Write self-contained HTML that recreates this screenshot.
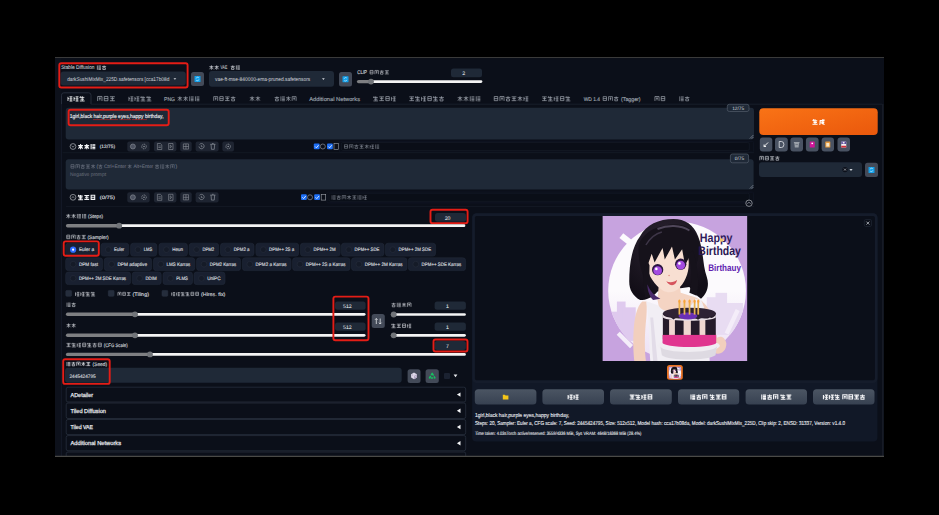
<!DOCTYPE html>
<html><head><meta charset="utf-8"><title>SD WebUI</title>
<style>html,body{margin:0;padding:0;background:#000;width:939px;height:515px;overflow:hidden}svg{display:block}text{font-family:"Liberation Sans",sans-serif}</style>
</head><body><div id="wrap">
<svg width="939" height="515" viewBox="0 0 939 515" font-family="Liberation Sans, sans-serif" text-rendering="geometricPrecision">
<rect x="0.00" y="0.00" width="939.00" height="515.00" rx="0" fill="#000" />
<rect x="55.00" y="57.00" width="829.00" height="400.00" rx="0" fill="#0b0f19" />
<rect x="55.00" y="58.00" width="6.50" height="398.00" rx="0" fill="#0d111b" />
<line x1="55.00" y1="57.50" x2="884.00" y2="57.50" stroke="#3a3a3a" stroke-width="1" />
<rect x="66.20" y="452.00" width="399.50" height="8.00" rx="1.8" fill="#0b0f19" stroke="#242b39" stroke-width="0.9" />
<line x1="61.50" y1="104.00" x2="61.50" y2="456.00" stroke="#131826" stroke-width="1" />
<line x1="882.80" y1="104.00" x2="882.80" y2="456.00" stroke="#171b26" stroke-width="1.6" />
<text x="61.20" y="69.44" font-size="5.4" fill="#c9ccd2" font-weight="400" stroke="#c9ccd2" stroke-width="0.08" textLength="33.30" lengthAdjust="spacingAndGlyphs">Stable Diffusion</text>
<path transform="translate(96.35,64.95) scale(0.510)" d="M2 1v8.5 M4 2h5 M4 4.3h5 M4 6.6h5 M4 8.8h5" stroke="#c9ccd2" stroke-width="1.4" fill="none" opacity="1.00"/>
<path transform="translate(101.55,64.95) scale(0.510)" d="M1 3h8 M5 1v4 M2.5 5.5h5v3.5h-5z" stroke="#c9ccd2" stroke-width="1.4" fill="none" opacity="1.00"/>
<rect x="60.60" y="71.50" width="125.20" height="14.10" rx="3" fill="#1f2937" />
<text x="67.20" y="80.88" font-size="5.5" fill="#d3d6dc" font-weight="400" textLength="102.10" lengthAdjust="spacingAndGlyphs">darkSushiMixMix_225D.safetensors [cca17b08d</text>
<path d="M173.5 78.2 h2.8 l-1.4 1.6z" fill="#d1d5db"/>
<rect x="59.30" y="63.30" width="128.30" height="24.20" rx="2" fill="none" stroke="#e41d16" stroke-width="1.9" />
<rect x="191.00" y="72.00" width="13.00" height="14.00" rx="2.5" fill="#434a58" />
<rect x="194.50" y="76.00" width="6.00" height="6.00" rx="0.5" fill="#12a0ea" />
<path d="M198.80 77.80 a1.5 1.5 0 0 0 -2.6 0.6 M196.20 80.20 a1.5 1.5 0 0 0 2.6 -0.6" stroke="#dff3ff" stroke-width="0.7" fill="none"/>
<path transform="translate(208.85,64.83) scale(0.514)" d="M1 3.5h8 M5 1v8.5 M5 4l-3.5 4.5 M5 4l3.5 4.5" stroke="#c9ccd2" stroke-width="1.4" fill="none" opacity="1.00"/>
<path transform="translate(214.10,64.83) scale(0.514)" d="M1 3.5h8 M5 1v8.5 M5 4l-3.5 4.5 M5 4l3.5 4.5" stroke="#c9ccd2" stroke-width="1.4" fill="none" opacity="1.00"/>
<text x="220.50" y="69.34" font-size="5.4" fill="#c9ccd2" font-weight="400" stroke="#c9ccd2" stroke-width="0.08" textLength="6.70" lengthAdjust="spacingAndGlyphs">VAE</text>
<path transform="translate(230.25,64.90) scale(0.500)" d="M1 3h8 M5 1v4 M2.5 5.5h5v3.5h-5z" stroke="#c9ccd2" stroke-width="1.4" fill="none" opacity="1.00"/>
<path transform="translate(235.35,64.90) scale(0.500)" d="M2 1v8.5 M4 2h5 M4 4.3h5 M4 6.6h5 M4 8.8h5" stroke="#c9ccd2" stroke-width="1.4" fill="none" opacity="1.00"/>
<rect x="209.00" y="71.00" width="125.00" height="15.70" rx="3" fill="#1f2937" />
<text x="215.00" y="80.78" font-size="5.5" fill="#d3d6dc" font-weight="400" textLength="95.20" lengthAdjust="spacingAndGlyphs">vae-ft-mse-840000-ema-pruned.safetensors</text>
<path d="M322 78.3 h2.8 l-1.4 1.6z" fill="#d1d5db"/>
<rect x="339.00" y="72.00" width="13.00" height="14.60" rx="2.5" fill="#434a58" />
<rect x="342.50" y="76.30" width="6.00" height="6.00" rx="0.5" fill="#12a0ea" />
<path d="M346.80 78.10 a1.5 1.5 0 0 0 -2.6 0.6 M344.20 80.50 a1.5 1.5 0 0 0 2.6 -0.6" stroke="#dff3ff" stroke-width="0.7" fill="none"/>
<text x="357.20" y="74.14" font-size="5.4" fill="#c9ccd2" font-weight="400" stroke="#c9ccd2" stroke-width="0.16" textLength="9.90" lengthAdjust="spacingAndGlyphs">CLIP</text>
<path transform="translate(369.05,69.70) scale(0.500)" d="M2 1.5h6v7h-6z M2 5h6" stroke="#c9ccd2" stroke-width="1.4" fill="none" opacity="0.83"/>
<path transform="translate(374.15,69.70) scale(0.500)" d="M1.5 9V1.5h7V9 M3.5 4.5h3 M5 3v5" stroke="#c9ccd2" stroke-width="1.4" fill="none" opacity="0.83"/>
<path transform="translate(379.25,69.70) scale(0.500)" d="M1 3h8 M5 1v4 M2.5 5.5h5v3.5h-5z" stroke="#c9ccd2" stroke-width="1.4" fill="none" opacity="0.83"/>
<path transform="translate(384.35,69.70) scale(0.500)" d="M1 2h8 M2 5h6 M1 8.5h8 M5 2v6.5" stroke="#c9ccd2" stroke-width="1.4" fill="none" opacity="0.83"/>
<rect x="451.00" y="68.50" width="31.00" height="8.70" rx="2.5" fill="#1f2937" />
<text x="463.60" y="75.22" font-size="5.2" fill="#e5e7eb" font-weight="400" stroke="#e5e7eb" stroke-width="0.04" text-anchor="middle">2</text>
<line x1="358.60" y1="81.60" x2="371.00" y2="81.60" stroke="#7e7f82" stroke-width="3.4" stroke-linecap="round"/>
<line x1="371.00" y1="81.60" x2="481.00" y2="81.60" stroke="#f4f4f4" stroke-width="2.7" stroke-linecap="round"/>
<circle cx="371.00" cy="81.60" r="2.9" fill="#717479"/>
<path d="M61.5 104.2 V95.2 a2.4 2.4 0 0 1 2.4 -2.4 H88.6 a2.4 2.4 0 0 1 2.4 2.4 V104.2" fill="#0b0f19" stroke="#2a3140" stroke-width="0.9"/>
<line x1="91.00" y1="104.20" x2="882.00" y2="104.20" stroke="#1a202c" stroke-width="0.9" />
<path transform="translate(67.06,95.61) scale(0.598)" d="M1.5 2v7 M1.5 5h2 M4 2h5 M6.5 2v7.5 M4 9h5 M4 5.5h5" stroke="#f3f4f6" stroke-width="1.4" fill="none" opacity="1.00"/>
<path transform="translate(73.16,95.61) scale(0.598)" d="M1.5 2v7 M1.5 5h2 M4 2h5 M6.5 2v7.5 M4 9h5 M4 5.5h5" stroke="#f3f4f6" stroke-width="1.4" fill="none" opacity="1.00"/>
<path transform="translate(79.26,95.61) scale(0.598)" d="M2 1l-1 3 M1.5 3h7 M5 1v8 M2 6h6 M1 9h8" stroke="#f3f4f6" stroke-width="1.4" fill="none" opacity="1.00"/>
<path transform="translate(96.76,95.53) scale(0.614)" d="M1.5 9V1.5h7V9 M3.5 4.5h3 M5 3v5" stroke="#9aa0aa" stroke-width="1.4" fill="none" opacity="0.90"/>
<path transform="translate(103.03,95.53) scale(0.614)" d="M2 1.5h6v7h-6z M2 5h6" stroke="#9aa0aa" stroke-width="1.4" fill="none" opacity="0.90"/>
<path transform="translate(109.30,95.53) scale(0.614)" d="M1 2h8 M2 5h6 M1 8.5h8 M5 2v6.5" stroke="#9aa0aa" stroke-width="1.4" fill="none" opacity="0.90"/>
<path transform="translate(128.06,95.66) scale(0.588)" d="M1.5 2v7 M1.5 5h2 M4 2h5 M6.5 2v7.5 M4 9h5 M4 5.5h5" stroke="#9aa0aa" stroke-width="1.4" fill="none" opacity="0.90"/>
<path transform="translate(134.06,95.66) scale(0.588)" d="M1.5 2v7 M1.5 5h2 M4 2h5 M6.5 2v7.5 M4 9h5 M4 5.5h5" stroke="#9aa0aa" stroke-width="1.4" fill="none" opacity="0.90"/>
<path transform="translate(140.06,95.66) scale(0.588)" d="M2 1l-1 3 M1.5 3h7 M5 1v8 M2 6h6 M1 9h8" stroke="#9aa0aa" stroke-width="1.4" fill="none" opacity="0.90"/>
<path transform="translate(146.06,95.66) scale(0.588)" d="M2 1l-1 3 M1.5 3h7 M5 1v8 M2 6h6 M1 9h8" stroke="#9aa0aa" stroke-width="1.4" fill="none" opacity="0.90"/>
<path transform="translate(212.86,95.76) scale(0.568)" d="M1.5 9V1.5h7V9 M3.5 4.5h3 M5 3v5" stroke="#9aa0aa" stroke-width="1.4" fill="none" opacity="0.90"/>
<path transform="translate(218.66,95.76) scale(0.568)" d="M2 1.5h6v7h-6z M2 5h6" stroke="#9aa0aa" stroke-width="1.4" fill="none" opacity="0.90"/>
<path transform="translate(224.46,95.76) scale(0.568)" d="M1 2h8 M2 5h6 M1 8.5h8 M5 2v6.5" stroke="#9aa0aa" stroke-width="1.4" fill="none" opacity="0.90"/>
<path transform="translate(230.26,95.76) scale(0.568)" d="M1 3h8 M5 1v4 M2.5 5.5h5v3.5h-5z" stroke="#9aa0aa" stroke-width="1.4" fill="none" opacity="0.90"/>
<path transform="translate(249.26,95.76) scale(0.568)" d="M1 3.5h8 M5 1v8.5 M5 4l-3.5 4.5 M5 4l3.5 4.5" stroke="#9aa0aa" stroke-width="1.4" fill="none" opacity="0.90"/>
<path transform="translate(255.06,95.76) scale(0.568)" d="M1 3.5h8 M5 1v8.5 M5 4l-3.5 4.5 M5 4l3.5 4.5" stroke="#9aa0aa" stroke-width="1.4" fill="none" opacity="0.90"/>
<path transform="translate(274.06,95.78) scale(0.564)" d="M1 3h8 M5 1v4 M2.5 5.5h5v3.5h-5z" stroke="#9aa0aa" stroke-width="1.4" fill="none" opacity="0.90"/>
<path transform="translate(279.81,95.78) scale(0.564)" d="M2 1v8.5 M4 2h5 M4 4.3h5 M4 6.6h5 M4 8.8h5" stroke="#9aa0aa" stroke-width="1.4" fill="none" opacity="0.90"/>
<path transform="translate(285.56,95.78) scale(0.564)" d="M1 3.5h8 M5 1v8.5 M5 4l-3.5 4.5 M5 4l3.5 4.5" stroke="#9aa0aa" stroke-width="1.4" fill="none" opacity="0.90"/>
<path transform="translate(291.31,95.78) scale(0.564)" d="M1.5 9V1.5h7V9 M3.5 4.5h3 M5 3v5" stroke="#9aa0aa" stroke-width="1.4" fill="none" opacity="0.90"/>
<path transform="translate(372.86,95.71) scale(0.578)" d="M2 1l-1 3 M1.5 3h7 M5 1v8 M2 6h6 M1 9h8" stroke="#9aa0aa" stroke-width="1.4" fill="none" opacity="0.90"/>
<path transform="translate(378.76,95.71) scale(0.578)" d="M1 2h8 M2 5h6 M1 8.5h8 M5 2v6.5" stroke="#9aa0aa" stroke-width="1.4" fill="none" opacity="0.90"/>
<path transform="translate(384.66,95.71) scale(0.578)" d="M2 1.5h6v7h-6z M2 5h6" stroke="#9aa0aa" stroke-width="1.4" fill="none" opacity="0.90"/>
<path transform="translate(390.56,95.71) scale(0.578)" d="M1.5 2v7 M1.5 5h2 M4 2h5 M6.5 2v7.5 M4 9h5 M4 5.5h5" stroke="#9aa0aa" stroke-width="1.4" fill="none" opacity="0.90"/>
<path transform="translate(408.76,95.68) scale(0.585)" d="M1 2h8 M2 5h6 M1 8.5h8 M5 2v6.5" stroke="#9aa0aa" stroke-width="1.4" fill="none" opacity="0.90"/>
<path transform="translate(414.73,95.68) scale(0.585)" d="M2 1l-1 3 M1.5 3h7 M5 1v8 M2 6h6 M1 9h8" stroke="#9aa0aa" stroke-width="1.4" fill="none" opacity="0.90"/>
<path transform="translate(420.69,95.68) scale(0.585)" d="M1.5 2v7 M1.5 5h2 M4 2h5 M6.5 2v7.5 M4 9h5 M4 5.5h5" stroke="#9aa0aa" stroke-width="1.4" fill="none" opacity="0.90"/>
<path transform="translate(426.66,95.68) scale(0.585)" d="M2 1.5h6v7h-6z M2 5h6" stroke="#9aa0aa" stroke-width="1.4" fill="none" opacity="0.90"/>
<path transform="translate(432.63,95.68) scale(0.585)" d="M2 1l-1 3 M1.5 3h7 M5 1v8 M2 6h6 M1 9h8" stroke="#9aa0aa" stroke-width="1.4" fill="none" opacity="0.90"/>
<path transform="translate(438.59,95.68) scale(0.585)" d="M1 3h8 M5 1v4 M2.5 5.5h5v3.5h-5z" stroke="#9aa0aa" stroke-width="1.4" fill="none" opacity="0.90"/>
<path transform="translate(457.06,95.66) scale(0.588)" d="M1 3.5h8 M5 1v8.5 M5 4l-3.5 4.5 M5 4l3.5 4.5" stroke="#9aa0aa" stroke-width="1.4" fill="none" opacity="0.90"/>
<path transform="translate(463.06,95.66) scale(0.588)" d="M1 3.5h8 M5 1v8.5 M5 4l-3.5 4.5 M5 4l3.5 4.5" stroke="#9aa0aa" stroke-width="1.4" fill="none" opacity="0.90"/>
<path transform="translate(469.06,95.66) scale(0.588)" d="M2 1v8.5 M4 2h5 M4 4.3h5 M4 6.6h5 M4 8.8h5" stroke="#9aa0aa" stroke-width="1.4" fill="none" opacity="0.90"/>
<path transform="translate(475.06,95.66) scale(0.588)" d="M2 1v8.5 M4 2h5 M4 4.3h5 M4 6.6h5 M4 8.8h5" stroke="#9aa0aa" stroke-width="1.4" fill="none" opacity="0.90"/>
<path transform="translate(493.06,95.66) scale(0.588)" d="M2 1.5h6v7h-6z M2 5h6" stroke="#9aa0aa" stroke-width="1.4" fill="none" opacity="0.90"/>
<path transform="translate(499.06,95.66) scale(0.588)" d="M1.5 9V1.5h7V9 M3.5 4.5h3 M5 3v5" stroke="#9aa0aa" stroke-width="1.4" fill="none" opacity="0.90"/>
<path transform="translate(505.06,95.66) scale(0.588)" d="M1 3h8 M5 1v4 M2.5 5.5h5v3.5h-5z" stroke="#9aa0aa" stroke-width="1.4" fill="none" opacity="0.90"/>
<path transform="translate(511.06,95.66) scale(0.588)" d="M1 2h8 M2 5h6 M1 8.5h8 M5 2v6.5" stroke="#9aa0aa" stroke-width="1.4" fill="none" opacity="0.90"/>
<path transform="translate(517.06,95.66) scale(0.588)" d="M1 3.5h8 M5 1v8.5 M5 4l-3.5 4.5 M5 4l3.5 4.5" stroke="#9aa0aa" stroke-width="1.4" fill="none" opacity="0.90"/>
<path transform="translate(523.06,95.66) scale(0.588)" d="M1.5 2v7 M1.5 5h2 M4 2h5 M6.5 2v7.5 M4 9h5 M4 5.5h5" stroke="#9aa0aa" stroke-width="1.4" fill="none" opacity="0.90"/>
<path transform="translate(541.56,95.71) scale(0.578)" d="M1 2h8 M2 5h6 M1 8.5h8 M5 2v6.5" stroke="#9aa0aa" stroke-width="1.4" fill="none" opacity="0.90"/>
<path transform="translate(547.46,95.71) scale(0.578)" d="M2 1l-1 3 M1.5 3h7 M5 1v8 M2 6h6 M1 9h8" stroke="#9aa0aa" stroke-width="1.4" fill="none" opacity="0.90"/>
<path transform="translate(553.36,95.71) scale(0.578)" d="M1.5 2v7 M1.5 5h2 M4 2h5 M6.5 2v7.5 M4 9h5 M4 5.5h5" stroke="#9aa0aa" stroke-width="1.4" fill="none" opacity="0.90"/>
<path transform="translate(559.26,95.71) scale(0.578)" d="M2 1.5h6v7h-6z M2 5h6" stroke="#9aa0aa" stroke-width="1.4" fill="none" opacity="0.90"/>
<path transform="translate(565.16,95.71) scale(0.578)" d="M2 1l-1 3 M1.5 3h7 M5 1v8 M2 6h6 M1 9h8" stroke="#9aa0aa" stroke-width="1.4" fill="none" opacity="0.90"/>
<path transform="translate(654.06,95.66) scale(0.588)" d="M1.5 9V1.5h7V9 M3.5 4.5h3 M5 3v5" stroke="#9aa0aa" stroke-width="1.4" fill="none" opacity="0.90"/>
<path transform="translate(660.06,95.66) scale(0.588)" d="M2 1.5h6v7h-6z M2 5h6" stroke="#9aa0aa" stroke-width="1.4" fill="none" opacity="0.90"/>
<path transform="translate(678.66,95.81) scale(0.559)" d="M2 1v8.5 M4 2h5 M4 4.3h5 M4 6.6h5 M4 8.8h5" stroke="#9aa0aa" stroke-width="1.4" fill="none" opacity="0.90"/>
<path transform="translate(684.36,95.81) scale(0.559)" d="M1 3h8 M5 1v4 M2.5 5.5h5v3.5h-5z" stroke="#9aa0aa" stroke-width="1.4" fill="none" opacity="0.90"/>
<text x="164.00" y="100.54" font-size="5.4" fill="#9aa0aa" font-weight="400" stroke="#9aa0aa" stroke-width="0.16" textLength="11.00" lengthAdjust="spacingAndGlyphs">PNG</text>
<path transform="translate(177.06,95.78) scale(0.564)" d="M1 3.5h8 M5 1v8.5 M5 4l-3.5 4.5 M5 4l3.5 4.5" stroke="#9aa0aa" stroke-width="1.4" fill="none" opacity="0.90"/>
<path transform="translate(182.81,95.78) scale(0.564)" d="M1 3.5h8 M5 1v8.5 M5 4l-3.5 4.5 M5 4l3.5 4.5" stroke="#9aa0aa" stroke-width="1.4" fill="none" opacity="0.90"/>
<path transform="translate(188.56,95.78) scale(0.564)" d="M2 1v8.5 M4 2h5 M4 4.3h5 M4 6.6h5 M4 8.8h5" stroke="#9aa0aa" stroke-width="1.4" fill="none" opacity="0.90"/>
<path transform="translate(194.31,95.78) scale(0.564)" d="M2 1v8.5 M4 2h5 M4 4.3h5 M4 6.6h5 M4 8.8h5" stroke="#9aa0aa" stroke-width="1.4" fill="none" opacity="0.90"/>
<text x="309.30" y="100.62" font-size="5.6" fill="#9aa0aa" font-weight="400" stroke="#9aa0aa" stroke-width="0.16" textLength="50.70" lengthAdjust="spacingAndGlyphs">Additional Networks</text>
<text x="583.70" y="100.54" font-size="5.4" fill="#9aa0aa" font-weight="400" stroke="#9aa0aa" stroke-width="0.16" textLength="16.30" lengthAdjust="spacingAndGlyphs">WD 1.4</text>
<path transform="translate(602.06,95.82) scale(0.555)" d="M2 1.5h6v7h-6z M2 5h6" stroke="#9aa0aa" stroke-width="1.4" fill="none" opacity="0.90"/>
<path transform="translate(607.72,95.82) scale(0.555)" d="M1.5 9V1.5h7V9 M3.5 4.5h3 M5 3v5" stroke="#9aa0aa" stroke-width="1.4" fill="none" opacity="0.90"/>
<path transform="translate(613.39,95.82) scale(0.555)" d="M1 3h8 M5 1v4 M2.5 5.5h5v3.5h-5z" stroke="#9aa0aa" stroke-width="1.4" fill="none" opacity="0.90"/>
<text x="621.00" y="100.54" font-size="5.4" fill="#9aa0aa" font-weight="400" stroke="#9aa0aa" stroke-width="0.16" textLength="19.60" lengthAdjust="spacingAndGlyphs">(Tagger)</text>
<rect x="65.70" y="107.70" width="688.30" height="31.90" rx="3" fill="#1f2937" />
<text x="69.80" y="118.32" font-size="5.6" fill="#e5e7eb" font-weight="400" stroke="#e5e7eb" stroke-width="0.16" textLength="93.80" lengthAdjust="spacingAndGlyphs">1girl,black hair,purple eyes,happy birthday,</text>
<line x1="93.00" y1="119.60" x2="103.00" y2="119.60" stroke="#c62828" stroke-width="0.6" />
<line x1="104.00" y1="119.60" x2="118.00" y2="119.60" stroke="#c62828" stroke-width="0.6" />
<line x1="119.50" y1="119.60" x2="131.00" y2="119.60" stroke="#c62828" stroke-width="0.6" />
<line x1="132.00" y1="119.60" x2="147.00" y2="119.60" stroke="#c62828" stroke-width="0.6" />
<rect x="68.60" y="109.80" width="100.10" height="15.40" rx="2" fill="none" stroke="#e41d16" stroke-width="1.9" />
<rect x="727.30" y="104.30" width="21.70" height="7.20" rx="2" fill="#1f2937" stroke="#4b5563" stroke-width="0.8" />
<text x="738.15" y="109.63" font-size="4.8" fill="#d1d5db" font-weight="400" stroke="#d1d5db" stroke-width="0.02" text-anchor="middle">12/75</text>
<path d="M749.8 138.6 l3.6 -3.6 M751.6 138.8 l1.8 -1.8" stroke="#9ca3af" stroke-width="0.6"/>
<circle cx="73" cy="146.50" r="2.9" fill="none" stroke="#c9ccd2" stroke-width="0.6"/>
<path d="M71.5 145.80 l1.5 1.40 l1.5 -1.40" fill="none" stroke="#c9ccd2" stroke-width="0.6"/>
<path transform="translate(77.58,143.50) scale(0.600)" d="M1 3.5h8 M5 1v8.5 M5 4l-3.5 4.5 M5 4l3.5 4.5" stroke="#f3f4f6" stroke-width="1.8" fill="none" opacity="1.00"/>
<path transform="translate(83.75,143.50) scale(0.600)" d="M1 3.5h8 M5 1v8.5 M5 4l-3.5 4.5 M5 4l3.5 4.5" stroke="#f3f4f6" stroke-width="1.8" fill="none" opacity="1.00"/>
<path transform="translate(89.92,143.50) scale(0.600)" d="M2 1v8.5 M4 2h5 M4 4.3h5 M4 6.6h5 M4 8.8h5" stroke="#f3f4f6" stroke-width="1.8" fill="none" opacity="1.00"/>
<text x="99.70" y="148.23" font-size="4.8" fill="#d1d5db" font-weight="400" stroke="#d1d5db" stroke-width="0.16" textLength="15.30" lengthAdjust="spacingAndGlyphs">(12/75)</text>
<rect x="127.30" y="141.40" width="22.30" height="10.20" rx="2" fill="#1e2431" />
<circle cx="132.88" cy="146.50" r="2.5" fill="#4b5160" stroke="#8d929b" stroke-width="0.6"/>
<circle cx="144.03" cy="146.50" r="2.3" fill="none" stroke="#8d929b" stroke-width="0.9" stroke-dasharray="1 0.6"/>
<circle cx="144.03" cy="146.50" r="0.8" fill="#8d929b"/>
<rect x="154.00" y="141.40" width="22.40" height="10.20" rx="2" fill="#1e2431" />
<path d="M157.40 143.50 h3 l1.4 1.4 v4.6 h-4.4z M158.40 146.00 h2.4 M158.40 147.50 h2.4" fill="none" stroke="#8d929b" stroke-width="0.6"/>
<path d="M168.60 143.50 h4.4 v6 h-4.4z M170.20 145.00 v3 l1.6 -1.5z" fill="none" stroke="#8d929b" stroke-width="0.6"/>
<rect x="180.20" y="141.40" width="11.50" height="10.20" rx="2" fill="#1e2431" />
<path d="M183.35 143.90 h5.2 v5.2 h-5.2z M185.95 143.90 v5.2 M183.35 146.50 h5.2" fill="none" stroke="#8d929b" stroke-width="0.6"/>
<rect x="195.60" y="141.40" width="23.00" height="10.20" rx="2" fill="#1e2431" />
<path d="M199.55 144.50 a2.6 2.6 0 1 1 -0.6 2 M201.35 145.10 v1.6 h1.2" fill="none" stroke="#8d929b" stroke-width="0.7"/>
<path d="M210.25 144.30 h5.2 M211.05 144.30 l0.4 5 h2.8 l0.4 -5 M212.05 143.50 h1.6" fill="none" stroke="#8d929b" stroke-width="0.7"/>
<rect x="222.40" y="141.40" width="11.60" height="10.20" rx="2" fill="#1e2431" />
<circle cx="228.20" cy="146.50" r="2.3" fill="none" stroke="#8d929b" stroke-width="0.9" stroke-dasharray="1 0.6"/>
<circle cx="228.20" cy="146.50" r="0.8" fill="#8d929b"/>
<rect x="313.80" y="143.50" width="5.80" height="5.80" rx="1" fill="#1e6ff5" />
<path d="M315.10 146.50 l1.3 1.3 l2.2 -2.6" stroke="#fff" stroke-width="0.8" fill="none"/>
<circle cx="322.80" cy="146.50" r="2.5" fill="none" stroke="#a0a4ab" stroke-width="0.6"/>
<rect x="327.00" y="143.50" width="5.80" height="5.80" rx="1" fill="#1e6ff5" />
<path d="M328.30 146.50 l1.3 1.3 l2.2 -2.6" stroke="#fff" stroke-width="0.8" fill="none"/>
<rect x="334.00" y="143.50" width="4.50" height="5.80" rx="0" fill="none" stroke="#a0a4ab" stroke-width="0.6" />
<rect x="339.40" y="141.30" width="414.00" height="10.80" rx="1" fill="none" stroke="#121826" stroke-width="0.6" />
<rect x="341.40" y="142.50" width="407.90" height="8.00" rx="1.5" fill="#0a0e17" stroke="#161c28" stroke-width="0.6" />
<path transform="translate(343.45,143.96) scale(0.508)" d="M2 1.5h6v7h-6z M2 5h6" stroke="#8b919c" stroke-width="1.4" fill="none" opacity="0.75"/>
<path transform="translate(348.64,143.96) scale(0.508)" d="M1.5 9V1.5h7V9 M3.5 4.5h3 M5 3v5" stroke="#8b919c" stroke-width="1.4" fill="none" opacity="0.75"/>
<path transform="translate(353.82,143.96) scale(0.508)" d="M1 3h8 M5 1v4 M2.5 5.5h5v3.5h-5z" stroke="#8b919c" stroke-width="1.4" fill="none" opacity="0.75"/>
<path transform="translate(359.01,143.96) scale(0.508)" d="M1 2h8 M2 5h6 M1 8.5h8 M5 2v6.5" stroke="#8b919c" stroke-width="1.4" fill="none" opacity="0.75"/>
<path transform="translate(364.19,143.96) scale(0.508)" d="M1 3.5h8 M5 1v8.5 M5 4l-3.5 4.5 M5 4l3.5 4.5" stroke="#8b919c" stroke-width="1.4" fill="none" opacity="0.75"/>
<path transform="translate(369.38,143.96) scale(0.508)" d="M1.5 2v7 M1.5 5h2 M4 2h5 M6.5 2v7.5 M4 9h5 M4 5.5h5" stroke="#8b919c" stroke-width="1.4" fill="none" opacity="0.75"/>
<path transform="translate(374.57,143.96) scale(0.508)" d="M2 1v8.5 M4 2h5 M4 4.3h5 M4 6.6h5 M4 8.8h5" stroke="#8b919c" stroke-width="1.4" fill="none" opacity="0.75"/>
<line x1="62.70" y1="152.70" x2="754.00" y2="152.70" stroke="#151a26" stroke-width="0.8" />
<rect x="65.70" y="159.20" width="687.90" height="30.30" rx="3" fill="#1f2937" />
<path transform="translate(69.95,163.87) scale(0.506)" d="M2 1.5h6v7h-6z M2 5h6" stroke="#6b7280" stroke-width="1.4" fill="none" opacity="0.90"/>
<path transform="translate(75.11,163.87) scale(0.506)" d="M1.5 9V1.5h7V9 M3.5 4.5h3 M5 3v5" stroke="#6b7280" stroke-width="1.4" fill="none" opacity="0.90"/>
<path transform="translate(80.27,163.87) scale(0.506)" d="M1 3h8 M5 1v4 M2.5 5.5h5v3.5h-5z" stroke="#6b7280" stroke-width="1.4" fill="none" opacity="0.90"/>
<path transform="translate(85.43,163.87) scale(0.506)" d="M1 2h8 M2 5h6 M1 8.5h8 M5 2v6.5" stroke="#6b7280" stroke-width="1.4" fill="none" opacity="0.90"/>
<path transform="translate(90.59,163.87) scale(0.506)" d="M1 3.5h8 M5 1v8.5 M5 4l-3.5 4.5 M5 4l3.5 4.5" stroke="#6b7280" stroke-width="1.4" fill="none" opacity="0.90"/>
<text x="96.50" y="168.20" font-size="5" fill="#6b7280" font-weight="400" stroke="#6b7280" stroke-width="0.16">(</text>
<path transform="translate(98.05,164.00) scale(0.480)" d="M1 3h8 M5 1v4 M2.5 5.5h5v3.5h-5z" stroke="#6b7280" stroke-width="1.4" fill="none" opacity="0.90"/>
<text x="104.00" y="168.20" font-size="5" fill="#6b7280" font-weight="400" stroke="#6b7280" stroke-width="0.08" textLength="22.10" lengthAdjust="spacingAndGlyphs">Ctrl+Enter</text>
<path transform="translate(127.25,164.00) scale(0.480)" d="M1 3.5h8 M5 1v8.5 M5 4l-3.5 4.5 M5 4l3.5 4.5" stroke="#6b7280" stroke-width="1.4" fill="none" opacity="0.90"/>
<text x="133.40" y="168.20" font-size="5" fill="#6b7280" font-weight="400" stroke="#6b7280" stroke-width="0.08" textLength="19.80" lengthAdjust="spacingAndGlyphs">Alt+Enter</text>
<path transform="translate(154.55,163.89) scale(0.502)" d="M1 3h8 M5 1v4 M2.5 5.5h5v3.5h-5z" stroke="#6b7280" stroke-width="1.4" fill="none" opacity="0.90"/>
<path transform="translate(159.68,163.89) scale(0.502)" d="M2 1v8.5 M4 2h5 M4 4.3h5 M4 6.6h5 M4 8.8h5" stroke="#6b7280" stroke-width="1.4" fill="none" opacity="0.90"/>
<path transform="translate(164.80,163.89) scale(0.502)" d="M1 3.5h8 M5 1v8.5 M5 4l-3.5 4.5 M5 4l3.5 4.5" stroke="#6b7280" stroke-width="1.4" fill="none" opacity="0.90"/>
<path transform="translate(169.93,163.89) scale(0.502)" d="M1.5 9V1.5h7V9 M3.5 4.5h3 M5 3v5" stroke="#6b7280" stroke-width="1.4" fill="none" opacity="0.90"/>
<text x="175.50" y="168.20" font-size="5" fill="#6b7280" font-weight="400" stroke="#6b7280" stroke-width="0.16">)</text>
<text x="69.90" y="175.70" font-size="5" fill="#5f6672" font-weight="400" stroke="#5f6672" stroke-width="0.08" textLength="36.20" lengthAdjust="spacingAndGlyphs">Negative prompt</text>
<rect x="730.40" y="154.00" width="18.20" height="8.80" rx="2" fill="#1f2937" stroke="#4b5563" stroke-width="0.8" />
<text x="739.50" y="160.13" font-size="4.8" fill="#d1d5db" font-weight="400" stroke="#d1d5db" stroke-width="0.02" text-anchor="middle">0/75</text>
<path d="M749.8 188.6 l3.6 -3.6 M751.6 188.8 l1.8 -1.8" stroke="#9ca3af" stroke-width="0.6"/>
<circle cx="73" cy="197.30" r="2.9" fill="none" stroke="#c9ccd2" stroke-width="0.6"/>
<path d="M71.5 198.00 l1.5 -1.40 l1.5 1.40" fill="none" stroke="#c9ccd2" stroke-width="0.6"/>
<path transform="translate(77.58,194.30) scale(0.600)" d="M2 1l-1 3 M1.5 3h7 M5 1v8 M2 6h6 M1 9h8" stroke="#f3f4f6" stroke-width="1.8" fill="none" opacity="1.00"/>
<path transform="translate(83.75,194.30) scale(0.600)" d="M1 2h8 M2 5h6 M1 8.5h8 M5 2v6.5" stroke="#f3f4f6" stroke-width="1.8" fill="none" opacity="1.00"/>
<path transform="translate(89.92,194.30) scale(0.600)" d="M2 1.5h6v7h-6z M2 5h6" stroke="#f3f4f6" stroke-width="1.8" fill="none" opacity="1.00"/>
<text x="99.70" y="199.03" font-size="4.8" fill="#d1d5db" font-weight="400" stroke="#d1d5db" stroke-width="0.16" textLength="15.30" lengthAdjust="spacingAndGlyphs">(0/75)</text>
<rect x="127.30" y="192.20" width="22.30" height="10.20" rx="2" fill="#1e2431" />
<circle cx="132.88" cy="197.30" r="2.5" fill="#4b5160" stroke="#8d929b" stroke-width="0.6"/>
<circle cx="144.03" cy="197.30" r="2.3" fill="none" stroke="#8d929b" stroke-width="0.9" stroke-dasharray="1 0.6"/>
<circle cx="144.03" cy="197.30" r="0.8" fill="#8d929b"/>
<rect x="154.00" y="192.20" width="22.40" height="10.20" rx="2" fill="#1e2431" />
<path d="M157.40 194.30 h3 l1.4 1.4 v4.6 h-4.4z M158.40 196.80 h2.4 M158.40 198.30 h2.4" fill="none" stroke="#8d929b" stroke-width="0.6"/>
<path d="M168.60 194.30 h4.4 v6 h-4.4z M170.20 195.80 v3 l1.6 -1.5z" fill="none" stroke="#8d929b" stroke-width="0.6"/>
<rect x="180.20" y="192.20" width="11.50" height="10.20" rx="2" fill="#1e2431" />
<path d="M183.35 194.70 h5.2 v5.2 h-5.2z M185.95 194.70 v5.2 M183.35 197.30 h5.2" fill="none" stroke="#8d929b" stroke-width="0.6"/>
<rect x="195.60" y="192.20" width="23.00" height="10.20" rx="2" fill="#1e2431" />
<path d="M199.55 195.30 a2.6 2.6 0 1 1 -0.6 2 M201.35 195.90 v1.6 h1.2" fill="none" stroke="#8d929b" stroke-width="0.7"/>
<path d="M210.25 195.10 h5.2 M211.05 195.10 l0.4 5 h2.8 l0.4 -5 M212.05 194.30 h1.6" fill="none" stroke="#8d929b" stroke-width="0.7"/>
<rect x="301.00" y="194.30" width="5.80" height="5.80" rx="1" fill="#1e6ff5" />
<path d="M302.30 197.30 l1.3 1.3 l2.2 -2.6" stroke="#fff" stroke-width="0.8" fill="none"/>
<circle cx="310.00" cy="197.30" r="2.5" fill="none" stroke="#a0a4ab" stroke-width="0.6"/>
<rect x="314.20" y="194.30" width="5.80" height="5.80" rx="1" fill="#1e6ff5" />
<path d="M315.50 197.30 l1.3 1.3 l2.2 -2.6" stroke="#fff" stroke-width="0.8" fill="none"/>
<rect x="321.20" y="194.30" width="4.50" height="5.80" rx="0" fill="none" stroke="#a0a4ab" stroke-width="0.6" />
<rect x="327.00" y="192.10" width="426.40" height="10.80" rx="1" fill="none" stroke="#121826" stroke-width="0.6" />
<rect x="329.00" y="193.30" width="420.30" height="8.00" rx="1.5" fill="#0a0e17" stroke="#161c28" stroke-width="0.6" />
<path transform="translate(331.05,194.76) scale(0.508)" d="M2 1v8.5 M4 2h5 M4 4.3h5 M4 6.6h5 M4 8.8h5" stroke="#8b919c" stroke-width="1.4" fill="none" opacity="0.75"/>
<path transform="translate(336.24,194.76) scale(0.508)" d="M1 3h8 M5 1v4 M2.5 5.5h5v3.5h-5z" stroke="#8b919c" stroke-width="1.4" fill="none" opacity="0.75"/>
<path transform="translate(341.42,194.76) scale(0.508)" d="M1.5 9V1.5h7V9 M3.5 4.5h3 M5 3v5" stroke="#8b919c" stroke-width="1.4" fill="none" opacity="0.75"/>
<path transform="translate(346.61,194.76) scale(0.508)" d="M1 3.5h8 M5 1v8.5 M5 4l-3.5 4.5 M5 4l3.5 4.5" stroke="#8b919c" stroke-width="1.4" fill="none" opacity="0.75"/>
<path transform="translate(351.79,194.76) scale(0.508)" d="M1 2h8 M2 5h6 M1 8.5h8 M5 2v6.5" stroke="#8b919c" stroke-width="1.4" fill="none" opacity="0.75"/>
<path transform="translate(356.98,194.76) scale(0.508)" d="M2 1v8.5 M4 2h5 M4 4.3h5 M4 6.6h5 M4 8.8h5" stroke="#8b919c" stroke-width="1.4" fill="none" opacity="0.75"/>
<path transform="translate(362.17,194.76) scale(0.508)" d="M1.5 2v7 M1.5 5h2 M4 2h5 M6.5 2v7.5 M4 9h5 M4 5.5h5" stroke="#8b919c" stroke-width="1.4" fill="none" opacity="0.75"/>
<line x1="66.00" y1="206.60" x2="754.00" y2="206.60" stroke="#151a26" stroke-width="0.8" />
<defs><linearGradient id="og" x1="0" y1="0" x2="1" y2="1"><stop offset="0" stop-color="#f97316"/><stop offset="1" stop-color="#ea580c"/></linearGradient><linearGradient id="bg" x1="0" y1="0" x2="0" y2="1"><stop offset="0" stop-color="#4b5563"/><stop offset="1" stop-color="#374151"/></linearGradient></defs>
<rect x="759.30" y="108.30" width="118.40" height="26.70" rx="4" fill="url(#og)" />
<path transform="translate(811.80,118.50) scale(0.640)" d="M3 1l-1.5 3 M2 3.5h6.5 M5 1v8 M2.5 6h5.5 M1 9h8" stroke="#ffffff" stroke-width="1.7" fill="none" opacity="1.00"/>
<path transform="translate(818.80,118.50) scale(0.640)" d="M1.5 3h7.5 M2 3v5.5 l-1 1.2 M2 5.5h3 v3 M6 1 C6 6 7 9 9 9.5 M8.5 5l-3 4 M7.5 1.2l1 1" stroke="#ffffff" stroke-width="1.7" fill="none" opacity="1.00"/>
<rect x="759.80" y="137.60" width="12.50" height="13.80" rx="3" fill="#495262" />
<path d="M768.05 142.50 L764.05 146.50 M764.05 144.50 v2 h2" stroke="#fff" stroke-width="0.9" fill="none"/>
<rect x="775.00" y="137.60" width="12.80" height="13.80" rx="3" fill="#495262" />
<path d="M779.20 141.50 h2.2 a2.5 3 0 0 1 0 6 h-2.2z" stroke="#e5e7eb" stroke-width="0.8" fill="none"/>
<rect x="790.40" y="137.60" width="12.60" height="13.80" rx="3" fill="#495262" />
<path d="M793.90 141.90 h5.6 v1.3 h-5.6z M794.40 143.20 h4.6 l-0.4 4.3 h-3.8z" fill="#9aa0a8"/>
<path d="M795.50 144.50 h2.4" stroke="#5b6270" stroke-width="0.6"/>
<rect x="805.90" y="137.60" width="12.70" height="13.80" rx="3" fill="#495262" />
<rect x="809.75" y="141.50" width="5.00" height="6.00" rx="0.5" fill="#d1169a" />
<rect x="811.45" y="142.70" width="1.60" height="1.40" rx="0" fill="#fff" />
<rect x="821.60" y="137.60" width="12.40" height="13.80" rx="3" fill="#495262" />
<rect x="825.30" y="141.50" width="5.00" height="6.00" rx="0.5" fill="#e89a3c" />
<rect x="826.30" y="143.00" width="3.00" height="3.50" rx="0" fill="#f8e7c8" />
<rect x="837.50" y="137.60" width="12.50" height="13.80" rx="3" fill="#495262" />
<rect x="841.25" y="141.50" width="5.00" height="6.00" rx="0.5" fill="#f2f0f6" />
<rect x="841.25" y="141.50" width="5.00" height="2.40" rx="0.3" fill="#5b4b9a" />
<rect x="842.75" y="141.90" width="1.80" height="1.60" rx="0" fill="#f2f0f6" />
<rect x="841.25" y="145.70" width="5.00" height="1.80" rx="0.3" fill="#d6303a" />
<path transform="translate(759.05,155.63) scale(0.514)" d="M1.5 9V1.5h7V9 M3.5 4.5h3 M5 3v5" stroke="#c9ccd2" stroke-width="1.4" fill="none" opacity="0.90"/>
<path transform="translate(764.30,155.63) scale(0.514)" d="M2 1.5h6v7h-6z M2 5h6" stroke="#c9ccd2" stroke-width="1.4" fill="none" opacity="0.90"/>
<path transform="translate(769.55,155.63) scale(0.514)" d="M1 2h8 M2 5h6 M1 8.5h8 M5 2v6.5" stroke="#c9ccd2" stroke-width="1.4" fill="none" opacity="0.90"/>
<path transform="translate(774.80,155.63) scale(0.514)" d="M1 3h8 M5 1v4 M2.5 5.5h5v3.5h-5z" stroke="#c9ccd2" stroke-width="1.4" fill="none" opacity="0.90"/>
<rect x="759.00" y="162.20" width="103.00" height="14.80" rx="3" fill="#1f2937" />
<circle cx="845" cy="169.6" r="2.6" fill="#0b0f19"/>
<path d="M844 168.6 l2 2 M846 168.6 l-2 2" stroke="#d1d5db" stroke-width="0.6"/>
<path d="M849.4 168.9 h3.2 l-1.6 2z" fill="#d1d5db"/>
<rect x="865.00" y="162.80" width="13.00" height="14.20" rx="2.5" fill="#434a58" />
<rect x="868.50" y="166.90" width="6.00" height="6.00" rx="0.5" fill="#12a0ea" />
<path d="M872.80 168.70 a1.5 1.5 0 0 0 -2.6 0.6 M870.20 171.10 a1.5 1.5 0 0 0 2.6 -0.6" stroke="#dff3ff" stroke-width="0.7" fill="none"/>
<circle cx="749" cy="203.2" r="3.2" fill="none" stroke="#c9ccd2" stroke-width="0.6"/>
<path d="M747.4 203.8 l1.6 -1.6 l1.6 1.6" stroke="#c9ccd2" stroke-width="0.6" fill="none"/>
<path transform="translate(65.75,213.42) scale(0.517)" d="M1 3.5h8 M5 1v8.5 M5 4l-3.5 4.5 M5 4l3.5 4.5" stroke="#c9ccd2" stroke-width="1.4" fill="none" opacity="0.90"/>
<path transform="translate(71.03,213.42) scale(0.517)" d="M1 3.5h8 M5 1v8.5 M5 4l-3.5 4.5 M5 4l3.5 4.5" stroke="#c9ccd2" stroke-width="1.4" fill="none" opacity="0.90"/>
<path transform="translate(76.30,213.42) scale(0.517)" d="M2 1v8.5 M4 2h5 M4 4.3h5 M4 6.6h5 M4 8.8h5" stroke="#c9ccd2" stroke-width="1.4" fill="none" opacity="0.90"/>
<path transform="translate(81.58,213.42) scale(0.517)" d="M2 1v8.5 M4 2h5 M4 4.3h5 M4 6.6h5 M4 8.8h5" stroke="#c9ccd2" stroke-width="1.4" fill="none" opacity="0.90"/>
<text x="88.10" y="217.80" font-size="5" fill="#c9ccd2" font-weight="400" stroke="#c9ccd2" stroke-width="0.16" textLength="15.00" lengthAdjust="spacingAndGlyphs">(Steps)</text>
<rect x="435.00" y="212.90" width="31.00" height="8.90" rx="2.5" fill="#1f2937" />
<text x="447.60" y="219.72" font-size="5.2" fill="#e5e7eb" font-weight="400" stroke="#e5e7eb" stroke-width="0.04" text-anchor="middle">20</text>
<rect x="430.50" y="209.70" width="37.10" height="13.60" rx="2" fill="none" stroke="#e41d16" stroke-width="1.9" />
<line x1="67.60" y1="225.70" x2="119.20" y2="225.70" stroke="#7e7f82" stroke-width="3.4" stroke-linecap="round"/>
<line x1="119.20" y1="225.70" x2="464.00" y2="225.70" stroke="#f4f4f4" stroke-width="2.7" stroke-linecap="round"/>
<circle cx="119.20" cy="225.70" r="2.9" fill="#717479"/>
<path transform="translate(65.75,234.38) scale(0.505)" d="M2 1.5h6v7h-6z M2 5h6" stroke="#c9ccd2" stroke-width="1.4" fill="none" opacity="0.90"/>
<path transform="translate(70.90,234.38) scale(0.505)" d="M1.5 9V1.5h7V9 M3.5 4.5h3 M5 3v5" stroke="#c9ccd2" stroke-width="1.4" fill="none" opacity="0.90"/>
<path transform="translate(76.05,234.38) scale(0.505)" d="M1 3h8 M5 1v4 M2.5 5.5h5v3.5h-5z" stroke="#c9ccd2" stroke-width="1.4" fill="none" opacity="0.90"/>
<path transform="translate(81.20,234.38) scale(0.505)" d="M1 2h8 M2 5h6 M1 8.5h8 M5 2v6.5" stroke="#c9ccd2" stroke-width="1.4" fill="none" opacity="0.90"/>
<text x="87.40" y="238.70" font-size="5" fill="#c9ccd2" font-weight="400" stroke="#c9ccd2" stroke-width="0.16" textLength="21.30" lengthAdjust="spacingAndGlyphs">(Sampler)</text>
<rect x="65.70" y="243.20" width="32.90" height="12.90" rx="2.8" fill="#192030" stroke="#222a39" stroke-width="0.6" />
<circle cx="73.10" cy="249.65" r="3.1" fill="#2f6bff"/>
<circle cx="73.10" cy="249.65" r="1.1" fill="#fff"/>
<text x="78.90" y="251.41" font-size="4.9" fill="#d5d8de" font-weight="400" stroke="#d5d8de" stroke-width="0.16" textLength="15.20" lengthAdjust="spacingAndGlyphs">Euler a</text>
<rect x="100.90" y="243.20" width="27.90" height="12.90" rx="2.8" fill="#192030" stroke="#222a39" stroke-width="0.6" />
<circle cx="108.30" cy="249.65" r="2.9" fill="#151b28" stroke="#262e3d" stroke-width="0.6"/>
<text x="114.10" y="251.41" font-size="4.9" fill="#d5d8de" font-weight="400" stroke="#d5d8de" stroke-width="0.16" textLength="10.20" lengthAdjust="spacingAndGlyphs">Euler</text>
<rect x="130.60" y="243.20" width="26.20" height="12.90" rx="2.8" fill="#192030" stroke="#222a39" stroke-width="0.6" />
<circle cx="138.00" cy="249.65" r="2.9" fill="#151b28" stroke="#262e3d" stroke-width="0.6"/>
<text x="143.80" y="251.41" font-size="4.9" fill="#d5d8de" font-weight="400" stroke="#d5d8de" stroke-width="0.16" textLength="8.50" lengthAdjust="spacingAndGlyphs">LMS</text>
<rect x="159.00" y="243.20" width="28.40" height="12.90" rx="2.8" fill="#192030" stroke="#222a39" stroke-width="0.6" />
<circle cx="166.40" cy="249.65" r="2.9" fill="#151b28" stroke="#262e3d" stroke-width="0.6"/>
<text x="172.20" y="251.41" font-size="4.9" fill="#d5d8de" font-weight="400" stroke="#d5d8de" stroke-width="0.16" textLength="10.70" lengthAdjust="spacingAndGlyphs">Heun</text>
<rect x="189.20" y="243.20" width="29.50" height="12.90" rx="2.8" fill="#192030" stroke="#222a39" stroke-width="0.6" />
<circle cx="196.60" cy="249.65" r="2.9" fill="#151b28" stroke="#262e3d" stroke-width="0.6"/>
<text x="202.40" y="251.41" font-size="4.9" fill="#d5d8de" font-weight="400" stroke="#d5d8de" stroke-width="0.16" textLength="11.80" lengthAdjust="spacingAndGlyphs">DPM2</text>
<rect x="220.50" y="243.20" width="33.50" height="12.90" rx="2.8" fill="#192030" stroke="#222a39" stroke-width="0.6" />
<circle cx="227.90" cy="249.65" r="2.9" fill="#151b28" stroke="#262e3d" stroke-width="0.6"/>
<text x="233.70" y="251.41" font-size="4.9" fill="#d5d8de" font-weight="400" stroke="#d5d8de" stroke-width="0.16" textLength="15.80" lengthAdjust="spacingAndGlyphs">DPM2 a</text>
<rect x="255.90" y="243.20" width="42.80" height="12.90" rx="2.8" fill="#192030" stroke="#222a39" stroke-width="0.6" />
<circle cx="263.30" cy="249.65" r="2.9" fill="#151b28" stroke="#262e3d" stroke-width="0.6"/>
<text x="269.10" y="251.41" font-size="4.9" fill="#d5d8de" font-weight="400" stroke="#d5d8de" stroke-width="0.16" textLength="25.10" lengthAdjust="spacingAndGlyphs">DPM++ 2S a</text>
<rect x="300.40" y="243.20" width="39.80" height="12.90" rx="2.8" fill="#192030" stroke="#222a39" stroke-width="0.6" />
<circle cx="307.80" cy="249.65" r="2.9" fill="#151b28" stroke="#262e3d" stroke-width="0.6"/>
<text x="313.60" y="251.41" font-size="4.9" fill="#d5d8de" font-weight="400" stroke="#d5d8de" stroke-width="0.16" textLength="22.10" lengthAdjust="spacingAndGlyphs">DPM++ 2M</text>
<rect x="341.40" y="243.20" width="42.60" height="12.90" rx="2.8" fill="#192030" stroke="#222a39" stroke-width="0.6" />
<circle cx="348.80" cy="249.65" r="2.9" fill="#151b28" stroke="#262e3d" stroke-width="0.6"/>
<text x="354.60" y="251.41" font-size="4.9" fill="#d5d8de" font-weight="400" stroke="#d5d8de" stroke-width="0.16" textLength="24.90" lengthAdjust="spacingAndGlyphs">DPM++ SDE</text>
<rect x="385.40" y="243.20" width="50.20" height="12.90" rx="2.8" fill="#192030" stroke="#222a39" stroke-width="0.6" />
<circle cx="392.80" cy="249.65" r="2.9" fill="#151b28" stroke="#262e3d" stroke-width="0.6"/>
<text x="398.60" y="251.41" font-size="4.9" fill="#d5d8de" font-weight="400" stroke="#d5d8de" stroke-width="0.16" textLength="32.50" lengthAdjust="spacingAndGlyphs">DPM++ 2M SDE</text>
<rect x="65.70" y="257.80" width="36.90" height="12.80" rx="2.8" fill="#192030" stroke="#222a39" stroke-width="0.6" />
<circle cx="73.10" cy="264.20" r="2.9" fill="#151b28" stroke="#262e3d" stroke-width="0.6"/>
<text x="78.90" y="265.96" font-size="4.9" fill="#d5d8de" font-weight="400" stroke="#d5d8de" stroke-width="0.16" textLength="19.20" lengthAdjust="spacingAndGlyphs">DPM fast</text>
<rect x="104.20" y="257.80" width="47.40" height="12.80" rx="2.8" fill="#192030" stroke="#222a39" stroke-width="0.6" />
<circle cx="111.60" cy="264.20" r="2.9" fill="#151b28" stroke="#262e3d" stroke-width="0.6"/>
<text x="117.40" y="265.96" font-size="4.9" fill="#d5d8de" font-weight="400" stroke="#d5d8de" stroke-width="0.16" textLength="29.70" lengthAdjust="spacingAndGlyphs">DPM adaptive</text>
<rect x="153.40" y="257.80" width="41.40" height="12.80" rx="2.8" fill="#192030" stroke="#222a39" stroke-width="0.6" />
<circle cx="160.80" cy="264.20" r="2.9" fill="#151b28" stroke="#262e3d" stroke-width="0.6"/>
<text x="166.60" y="265.96" font-size="4.9" fill="#d5d8de" font-weight="400" stroke="#d5d8de" stroke-width="0.16" textLength="23.70" lengthAdjust="spacingAndGlyphs">LMS Karras</text>
<rect x="196.60" y="257.80" width="44.00" height="12.80" rx="2.8" fill="#192030" stroke="#222a39" stroke-width="0.6" />
<circle cx="204.00" cy="264.20" r="2.9" fill="#151b28" stroke="#262e3d" stroke-width="0.6"/>
<text x="209.80" y="265.96" font-size="4.9" fill="#d5d8de" font-weight="400" stroke="#d5d8de" stroke-width="0.16" textLength="26.30" lengthAdjust="spacingAndGlyphs">DPM2 Karras</text>
<rect x="242.40" y="257.80" width="48.60" height="12.80" rx="2.8" fill="#192030" stroke="#222a39" stroke-width="0.6" />
<circle cx="249.80" cy="264.20" r="2.9" fill="#151b28" stroke="#262e3d" stroke-width="0.6"/>
<text x="255.60" y="265.96" font-size="4.9" fill="#d5d8de" font-weight="400" stroke="#d5d8de" stroke-width="0.16" textLength="30.90" lengthAdjust="spacingAndGlyphs">DPM2 a Karras</text>
<rect x="292.60" y="257.80" width="57.40" height="12.80" rx="2.8" fill="#192030" stroke="#222a39" stroke-width="0.6" />
<circle cx="300.00" cy="264.20" r="2.9" fill="#151b28" stroke="#262e3d" stroke-width="0.6"/>
<text x="305.80" y="265.96" font-size="4.9" fill="#d5d8de" font-weight="400" stroke="#d5d8de" stroke-width="0.16" textLength="39.70" lengthAdjust="spacingAndGlyphs">DPM++ 2S a Karras</text>
<rect x="351.50" y="257.80" width="55.50" height="12.80" rx="2.8" fill="#192030" stroke="#222a39" stroke-width="0.6" />
<circle cx="358.90" cy="264.20" r="2.9" fill="#151b28" stroke="#262e3d" stroke-width="0.6"/>
<text x="364.70" y="265.96" font-size="4.9" fill="#d5d8de" font-weight="400" stroke="#d5d8de" stroke-width="0.16" textLength="37.80" lengthAdjust="spacingAndGlyphs">DPM++ 2M Karras</text>
<rect x="408.40" y="257.80" width="57.20" height="12.80" rx="2.8" fill="#192030" stroke="#222a39" stroke-width="0.6" />
<circle cx="415.80" cy="264.20" r="2.9" fill="#151b28" stroke="#262e3d" stroke-width="0.6"/>
<text x="421.60" y="265.96" font-size="4.9" fill="#d5d8de" font-weight="400" stroke="#d5d8de" stroke-width="0.16" textLength="39.50" lengthAdjust="spacingAndGlyphs">DPM++ SDE Karras</text>
<rect x="65.70" y="272.00" width="64.90" height="12.60" rx="2.8" fill="#192030" stroke="#222a39" stroke-width="0.6" />
<circle cx="73.10" cy="278.30" r="2.9" fill="#151b28" stroke="#262e3d" stroke-width="0.6"/>
<text x="78.90" y="280.06" font-size="4.9" fill="#d5d8de" font-weight="400" stroke="#d5d8de" stroke-width="0.16" textLength="47.20" lengthAdjust="spacingAndGlyphs">DPM++ 2M SDE Karras</text>
<rect x="132.20" y="272.00" width="29.00" height="12.60" rx="2.8" fill="#192030" stroke="#222a39" stroke-width="0.6" />
<circle cx="139.60" cy="278.30" r="2.9" fill="#151b28" stroke="#262e3d" stroke-width="0.6"/>
<text x="145.40" y="280.06" font-size="4.9" fill="#d5d8de" font-weight="400" stroke="#d5d8de" stroke-width="0.16" textLength="11.30" lengthAdjust="spacingAndGlyphs">DDIM</text>
<rect x="163.00" y="272.00" width="29.50" height="12.60" rx="2.8" fill="#192030" stroke="#222a39" stroke-width="0.6" />
<circle cx="170.40" cy="278.30" r="2.9" fill="#151b28" stroke="#262e3d" stroke-width="0.6"/>
<text x="176.20" y="280.06" font-size="4.9" fill="#d5d8de" font-weight="400" stroke="#d5d8de" stroke-width="0.16" textLength="11.80" lengthAdjust="spacingAndGlyphs">PLMS</text>
<rect x="194.00" y="272.00" width="31.00" height="12.60" rx="2.8" fill="#192030" stroke="#222a39" stroke-width="0.6" />
<circle cx="201.40" cy="278.30" r="2.9" fill="#151b28" stroke="#262e3d" stroke-width="0.6"/>
<text x="207.20" y="280.06" font-size="4.9" fill="#d5d8de" font-weight="400" stroke="#d5d8de" stroke-width="0.16" textLength="13.30" lengthAdjust="spacingAndGlyphs">UniPC</text>
<rect x="63.70" y="241.40" width="35.10" height="14.40" rx="2" fill="none" stroke="#e41d16" stroke-width="1.9" />
<rect x="65.80" y="290.40" width="5.80" height="5.90" rx="1" fill="#252d3c" stroke="#2c3444" stroke-width="0.5" />
<rect x="108.30" y="290.40" width="5.80" height="5.90" rx="1" fill="#252d3c" stroke="#2c3444" stroke-width="0.5" />
<rect x="162.00" y="290.40" width="5.80" height="5.90" rx="1" fill="#252d3c" stroke="#2c3444" stroke-width="0.5" />
<path transform="translate(74.75,291.33) scale(0.514)" d="M1.5 2v7 M1.5 5h2 M4 2h5 M6.5 2v7.5 M4 9h5 M4 5.5h5" stroke="#c9ccd2" stroke-width="1.4" fill="none" opacity="0.90"/>
<path transform="translate(80.00,291.33) scale(0.514)" d="M1.5 2v7 M1.5 5h2 M4 2h5 M6.5 2v7.5 M4 9h5 M4 5.5h5" stroke="#c9ccd2" stroke-width="1.4" fill="none" opacity="0.90"/>
<path transform="translate(85.25,291.33) scale(0.514)" d="M2 1l-1 3 M1.5 3h7 M5 1v8 M2 6h6 M1 9h8" stroke="#c9ccd2" stroke-width="1.4" fill="none" opacity="0.90"/>
<path transform="translate(90.50,291.33) scale(0.514)" d="M2 1l-1 3 M1.5 3h7 M5 1v8 M2 6h6 M1 9h8" stroke="#c9ccd2" stroke-width="1.4" fill="none" opacity="0.90"/>
<path transform="translate(117.25,291.65) scale(0.451)" d="M1.5 9V1.5h7V9 M3.5 4.5h3 M5 3v5" stroke="#c9ccd2" stroke-width="1.4" fill="none" opacity="0.90"/>
<path transform="translate(121.85,291.65) scale(0.451)" d="M2 1.5h6v7h-6z M2 5h6" stroke="#c9ccd2" stroke-width="1.4" fill="none" opacity="0.90"/>
<path transform="translate(126.45,291.65) scale(0.451)" d="M1 2h8 M2 5h6 M1 8.5h8 M5 2v6.5" stroke="#c9ccd2" stroke-width="1.4" fill="none" opacity="0.90"/>
<text x="132.50" y="295.70" font-size="5" fill="#c9ccd2" font-weight="400" stroke="#c9ccd2" stroke-width="0.16" textLength="16.50" lengthAdjust="spacingAndGlyphs">(Tiling)</text>
<path transform="translate(170.95,291.56) scale(0.467)" d="M1.5 2v7 M1.5 5h2 M4 2h5 M6.5 2v7.5 M4 9h5 M4 5.5h5" stroke="#c9ccd2" stroke-width="1.4" fill="none" opacity="0.90"/>
<path transform="translate(175.71,291.56) scale(0.467)" d="M1.5 2v7 M1.5 5h2 M4 2h5 M6.5 2v7.5 M4 9h5 M4 5.5h5" stroke="#c9ccd2" stroke-width="1.4" fill="none" opacity="0.90"/>
<path transform="translate(180.48,291.56) scale(0.467)" d="M2 1l-1 3 M1.5 3h7 M5 1v8 M2 6h6 M1 9h8" stroke="#c9ccd2" stroke-width="1.4" fill="none" opacity="0.90"/>
<path transform="translate(185.25,291.56) scale(0.467)" d="M2 1l-1 3 M1.5 3h7 M5 1v8 M2 6h6 M1 9h8" stroke="#c9ccd2" stroke-width="1.4" fill="none" opacity="0.90"/>
<path transform="translate(190.01,291.56) scale(0.467)" d="M2 1.5h6v7h-6z M2 5h6" stroke="#c9ccd2" stroke-width="1.4" fill="none" opacity="0.90"/>
<path transform="translate(194.78,291.56) scale(0.467)" d="M2 1.5h6v7h-6z M2 5h6" stroke="#c9ccd2" stroke-width="1.4" fill="none" opacity="0.90"/>
<text x="201.00" y="295.70" font-size="5" fill="#c9ccd2" font-weight="400" stroke="#c9ccd2" stroke-width="0.16" textLength="24.40" lengthAdjust="spacingAndGlyphs">(Hires. fix)</text>
<path transform="translate(66.05,302.10) scale(0.500)" d="M2 1v8.5 M4 2h5 M4 4.3h5 M4 6.6h5 M4 8.8h5" stroke="#c9ccd2" stroke-width="1.4" fill="none" opacity="0.90"/>
<path transform="translate(71.15,302.10) scale(0.500)" d="M1 3h8 M5 1v4 M2.5 5.5h5v3.5h-5z" stroke="#c9ccd2" stroke-width="1.4" fill="none" opacity="0.90"/>
<line x1="67.60" y1="314.30" x2="135.00" y2="314.30" stroke="#7e7f82" stroke-width="3.4" stroke-linecap="round"/>
<line x1="135.00" y1="314.30" x2="364.20" y2="314.30" stroke="#f4f4f4" stroke-width="2.7" stroke-linecap="round"/>
<circle cx="135.00" cy="314.30" r="2.9" fill="#717479"/>
<rect x="335.00" y="301.40" width="30.60" height="8.40" rx="2.5" fill="#1f2937" />
<text x="347.40" y="307.97" font-size="5.2" fill="#e5e7eb" font-weight="400" stroke="#e5e7eb" stroke-width="0.04" text-anchor="middle">512</text>
<path transform="translate(66.05,322.90) scale(0.500)" d="M1 3.5h8 M5 1v8.5 M5 4l-3.5 4.5 M5 4l3.5 4.5" stroke="#c9ccd2" stroke-width="1.4" fill="none" opacity="0.90"/>
<path transform="translate(71.15,322.90) scale(0.500)" d="M1 3.5h8 M5 1v8.5 M5 4l-3.5 4.5 M5 4l3.5 4.5" stroke="#c9ccd2" stroke-width="1.4" fill="none" opacity="0.90"/>
<line x1="67.60" y1="335.30" x2="135.00" y2="335.30" stroke="#7e7f82" stroke-width="3.4" stroke-linecap="round"/>
<line x1="135.00" y1="335.30" x2="364.20" y2="335.30" stroke="#f4f4f4" stroke-width="2.7" stroke-linecap="round"/>
<circle cx="135.00" cy="335.30" r="2.9" fill="#717479"/>
<rect x="335.00" y="322.50" width="30.60" height="8.20" rx="2.5" fill="#1f2937" />
<text x="347.40" y="328.97" font-size="5.2" fill="#e5e7eb" font-weight="400" stroke="#e5e7eb" stroke-width="0.04" text-anchor="middle">512</text>
<rect x="333.40" y="296.60" width="35.10" height="43.70" rx="2" fill="none" stroke="#e41d16" stroke-width="1.9" />
<rect x="371.70" y="314.00" width="13.10" height="14.00" rx="2.5" fill="#434a58" />
<path d="M376.3 318.5 v5.5 M375 319.8 l1.3 -1.3 l1.3 1.3 M380.2 318.5 v5.5 M378.9 322.7 l1.3 1.3 l1.3 -1.3" stroke="#e5e7eb" stroke-width="0.8" fill="none"/>
<path transform="translate(391.05,302.25) scale(0.510)" d="M1 3h8 M5 1v4 M2.5 5.5h5v3.5h-5z" stroke="#c9ccd2" stroke-width="1.4" fill="none" opacity="0.90"/>
<path transform="translate(396.25,302.25) scale(0.510)" d="M2 1v8.5 M4 2h5 M4 4.3h5 M4 6.6h5 M4 8.8h5" stroke="#c9ccd2" stroke-width="1.4" fill="none" opacity="0.90"/>
<path transform="translate(401.45,302.25) scale(0.510)" d="M1 3.5h8 M5 1v8.5 M5 4l-3.5 4.5 M5 4l3.5 4.5" stroke="#c9ccd2" stroke-width="1.4" fill="none" opacity="0.90"/>
<path transform="translate(406.65,302.25) scale(0.510)" d="M1.5 9V1.5h7V9 M3.5 4.5h3 M5 3v5" stroke="#c9ccd2" stroke-width="1.4" fill="none" opacity="0.90"/>
<rect x="434.60" y="301.40" width="31.30" height="8.40" rx="2.5" fill="#1f2937" />
<text x="447.35" y="307.97" font-size="5.2" fill="#e5e7eb" font-weight="400" stroke="#e5e7eb" stroke-width="0.04" text-anchor="middle">1</text>
<line x1="392.60" y1="314.50" x2="393.70" y2="314.50" stroke="#7e7f82" stroke-width="3.4" stroke-linecap="round"/>
<line x1="393.70" y1="314.50" x2="464.50" y2="314.50" stroke="#f4f4f4" stroke-width="2.7" stroke-linecap="round"/>
<circle cx="393.70" cy="314.50" r="2.9" fill="#717479"/>
<path transform="translate(391.05,323.15) scale(0.510)" d="M2 1l-1 3 M1.5 3h7 M5 1v8 M2 6h6 M1 9h8" stroke="#c9ccd2" stroke-width="1.4" fill="none" opacity="0.90"/>
<path transform="translate(396.25,323.15) scale(0.510)" d="M1 2h8 M2 5h6 M1 8.5h8 M5 2v6.5" stroke="#c9ccd2" stroke-width="1.4" fill="none" opacity="0.90"/>
<path transform="translate(401.45,323.15) scale(0.510)" d="M2 1.5h6v7h-6z M2 5h6" stroke="#c9ccd2" stroke-width="1.4" fill="none" opacity="0.90"/>
<path transform="translate(406.65,323.15) scale(0.510)" d="M1.5 2v7 M1.5 5h2 M4 2h5 M6.5 2v7.5 M4 9h5 M4 5.5h5" stroke="#c9ccd2" stroke-width="1.4" fill="none" opacity="0.90"/>
<rect x="434.60" y="322.50" width="31.30" height="8.20" rx="2.5" fill="#1f2937" />
<text x="447.35" y="328.97" font-size="5.2" fill="#e5e7eb" font-weight="400" stroke="#e5e7eb" stroke-width="0.04" text-anchor="middle">1</text>
<line x1="392.60" y1="335.30" x2="393.70" y2="335.30" stroke="#7e7f82" stroke-width="3.4" stroke-linecap="round"/>
<line x1="393.70" y1="335.30" x2="464.50" y2="335.30" stroke="#f4f4f4" stroke-width="2.7" stroke-linecap="round"/>
<circle cx="393.70" cy="335.30" r="2.9" fill="#717479"/>
<path transform="translate(66.05,342.35) scale(0.510)" d="M1 2h8 M2 5h6 M1 8.5h8 M5 2v6.5" stroke="#c9ccd2" stroke-width="1.4" fill="none" opacity="0.90"/>
<path transform="translate(71.25,342.35) scale(0.510)" d="M2 1l-1 3 M1.5 3h7 M5 1v8 M2 6h6 M1 9h8" stroke="#c9ccd2" stroke-width="1.4" fill="none" opacity="0.90"/>
<path transform="translate(76.45,342.35) scale(0.510)" d="M1.5 2v7 M1.5 5h2 M4 2h5 M6.5 2v7.5 M4 9h5 M4 5.5h5" stroke="#c9ccd2" stroke-width="1.4" fill="none" opacity="0.90"/>
<path transform="translate(81.65,342.35) scale(0.510)" d="M2 1.5h6v7h-6z M2 5h6" stroke="#c9ccd2" stroke-width="1.4" fill="none" opacity="0.90"/>
<path transform="translate(86.85,342.35) scale(0.510)" d="M2 1l-1 3 M1.5 3h7 M5 1v8 M2 6h6 M1 9h8" stroke="#c9ccd2" stroke-width="1.4" fill="none" opacity="0.90"/>
<path transform="translate(92.05,342.35) scale(0.510)" d="M1 3h8 M5 1v4 M2.5 5.5h5v3.5h-5z" stroke="#c9ccd2" stroke-width="1.4" fill="none" opacity="0.90"/>
<path transform="translate(97.25,342.35) scale(0.510)" d="M2 1.5h6v7h-6z M2 5h6" stroke="#c9ccd2" stroke-width="1.4" fill="none" opacity="0.90"/>
<text x="103.80" y="346.70" font-size="5" fill="#c9ccd2" font-weight="400" stroke="#c9ccd2" stroke-width="0.16" textLength="23.90" lengthAdjust="spacingAndGlyphs">(CFG Scale)</text>
<rect x="434.60" y="341.10" width="31.30" height="8.80" rx="2.5" fill="#1f2937" />
<text x="447.35" y="347.87" font-size="5.2" fill="#e5e7eb" font-weight="400" stroke="#e5e7eb" stroke-width="0.04" text-anchor="middle">7</text>
<rect x="433.50" y="339.50" width="34.00" height="12.00" rx="2" fill="none" stroke="#e41d16" stroke-width="1.9" />
<line x1="67.60" y1="354.40" x2="150.00" y2="354.40" stroke="#7e7f82" stroke-width="3.4" stroke-linecap="round"/>
<line x1="150.00" y1="354.40" x2="464.50" y2="354.40" stroke="#f4f4f4" stroke-width="2.7" stroke-linecap="round"/>
<circle cx="150.00" cy="354.40" r="2.9" fill="#717479"/>
<path transform="translate(66.05,361.47) scale(0.486)" d="M2 1v8.5 M4 2h5 M4 4.3h5 M4 6.6h5 M4 8.8h5" stroke="#e5e7eb" stroke-width="1.4" fill="none" opacity="0.98"/>
<path transform="translate(71.01,361.47) scale(0.486)" d="M1 3h8 M5 1v4 M2.5 5.5h5v3.5h-5z" stroke="#e5e7eb" stroke-width="1.4" fill="none" opacity="0.98"/>
<path transform="translate(75.97,361.47) scale(0.486)" d="M1.5 9V1.5h7V9 M3.5 4.5h3 M5 3v5" stroke="#e5e7eb" stroke-width="1.4" fill="none" opacity="0.98"/>
<path transform="translate(80.93,361.47) scale(0.486)" d="M1 3.5h8 M5 1v8.5 M5 4l-3.5 4.5 M5 4l3.5 4.5" stroke="#e5e7eb" stroke-width="1.4" fill="none" opacity="0.98"/>
<path transform="translate(85.89,361.47) scale(0.486)" d="M1 2h8 M2 5h6 M1 8.5h8 M5 2v6.5" stroke="#e5e7eb" stroke-width="1.4" fill="none" opacity="0.98"/>
<text x="92.60" y="365.70" font-size="5" fill="#c9ccd2" font-weight="400" stroke="#c9ccd2" stroke-width="0.16" textLength="14.40" lengthAdjust="spacingAndGlyphs">(Seed)</text>
<rect x="65.00" y="367.70" width="336.70" height="15.10" rx="3" fill="#1f2937" />
<text x="69.50" y="377.50" font-size="5" fill="#e5e7eb" font-weight="400" stroke="#e5e7eb" stroke-width="0.05" textLength="26.20" lengthAdjust="spacingAndGlyphs">2445424795</text>
<rect x="63.20" y="359.30" width="46.50" height="24.60" rx="2" fill="none" stroke="#e41d16" stroke-width="1.9" />
<rect x="407.60" y="369.30" width="12.90" height="13.70" rx="2.5" fill="#434a58" />
<path d="M414 372.6 l2.9 1.6 v3.4 l-2.9 1.6 l-2.9 -1.6 v-3.4z" fill="#dcd6e6"/><path d="M414 376 l2.9 -1.8 v3.4 l-2.9 1.6z" fill="#b3a9c4"/><circle cx="412.6" cy="375" r="0.45" fill="#8a7fa0"/><circle cx="415.6" cy="376.6" r="0.45" fill="#f4f0fa"/>
<rect x="425.60" y="369.30" width="13.20" height="13.70" rx="2.5" fill="#434a58" />
<path d="M432.2 373.3 l2.7 4.6 h-5.4z" fill="none" stroke="#16c060" stroke-width="1.5" stroke-linejoin="round" stroke-dasharray="2.6 0.9"/>
<rect x="444.00" y="373.00" width="6.00" height="6.00" rx="1" fill="#1b2231" />
<path d="M453.6 374.6 h3.8 l-1.9 2.6z" fill="#e5e7eb"/>
<rect x="66.20" y="387.20" width="399.50" height="14.80" rx="1.8" fill="#0b0f19" stroke="#242b39" stroke-width="0.9" />
<text x="70.50" y="396.69" font-size="5.8" fill="#e5e7eb" font-weight="400" stroke="#e5e7eb" stroke-width="0.25" textLength="22.50" lengthAdjust="spacingAndGlyphs">ADetailer</text>
<path d="M456.9 394.60 l3.6 -2.2 v4.4z" fill="#f3f4f6"/>
<rect x="66.20" y="403.00" width="399.50" height="15.50" rx="1.8" fill="#0b0f19" stroke="#242b39" stroke-width="0.9" />
<text x="70.50" y="412.84" font-size="5.8" fill="#e5e7eb" font-weight="400" stroke="#e5e7eb" stroke-width="0.25" textLength="35.50" lengthAdjust="spacingAndGlyphs">Tiled Diffusion</text>
<path d="M456.9 410.75 l3.6 -2.2 v4.4z" fill="#f3f4f6"/>
<rect x="66.20" y="419.50" width="399.50" height="15.10" rx="1.8" fill="#0b0f19" stroke="#242b39" stroke-width="0.9" />
<text x="70.50" y="429.14" font-size="5.8" fill="#e5e7eb" font-weight="400" stroke="#e5e7eb" stroke-width="0.25" textLength="22.50" lengthAdjust="spacingAndGlyphs">Tiled VAE</text>
<path d="M456.9 427.05 l3.6 -2.2 v4.4z" fill="#f3f4f6"/>
<rect x="66.20" y="435.60" width="399.50" height="15.20" rx="1.8" fill="#0b0f19" stroke="#242b39" stroke-width="0.9" />
<text x="70.50" y="445.29" font-size="5.8" fill="#e5e7eb" font-weight="400" stroke="#e5e7eb" stroke-width="0.25" textLength="50.50" lengthAdjust="spacingAndGlyphs">Additional Networks</text>
<path d="M456.9 443.20 l3.6 -2.2 v4.4z" fill="#f3f4f6"/>
<rect x="472.20" y="213.60" width="405.20" height="227.80" rx="4" fill="#111827" />
<rect x="473.60" y="214.60" width="402.60" height="167.00" rx="3" fill="#0b0f19" stroke="#151c2b" stroke-width="2.6" />
<rect x="864.30" y="219.50" width="7.20" height="7.00" rx="1.5" fill="#0b0f19" stroke="#1f2633" stroke-width="0.7" />
<path d="M866.4 221.6 l3 3 M869.4 221.6 l-3 3" stroke="#d1d5db" stroke-width="0.7"/>
<defs><g id="anime">
<defs><clipPath id="imgclip"><rect x="0" y="0" width="100" height="100"/></clipPath><clipPath id="circ"><circle cx="51.5" cy="51.5" r="47.5"/></clipPath><linearGradient id="circg" x1="0" y1="0" x2="0" y2="1"><stop offset="0.5" stop-color="#fcfafd"/><stop offset="1" stop-color="#ece0f4"/></linearGradient><radialGradient id="hairg" cx="0.45" cy="0.3" r="0.7"><stop offset="0" stop-color="#2c2432"/><stop offset="1" stop-color="#120e17"/></radialGradient></defs>
<g clip-path="url(#imgclip)">
<rect x="0" y="0" width="100" height="100" fill="#c7a3df"/>
<circle cx="51.5" cy="51.5" r="47.5" fill="url(#circg)"/>
<g clip-path="url(#circ)" fill="#dfcaee">
<rect x="5" y="66" width="7" height="20"/><rect x="10" y="59" width="6" height="27"/><rect x="14" y="63" width="9" height="23"/><rect x="4" y="74" width="20" height="12"/>
</g>
<g clip-path="url(#circ)" fill="#e8dcf2">
<rect x="72" y="56" width="7" height="26"/><rect x="78" y="53" width="8" height="29"/><rect x="85" y="60" width="12" height="22"/>
</g>
<rect x="12" y="14.5" width="10" height="4.2" fill="#fcfafd" transform="rotate(38 17 16.6)"/>
<rect x="9" y="84" width="13" height="3" fill="#f4edf9" transform="rotate(45 15.5 85.5)"/>
<rect x="88" y="64" width="3" height="18" fill="#f4edf9" transform="rotate(25 89.5 73)"/>
<path d="M26 14 C30 6 39 2 49 2 C57 2 63 6 66 14 C70 24 69 34 72 42 C74 48 72 54 68 57 C65 55 62 52 60 49 L38 52 C35 56 30 58 26 58 C21 55 18.5 51 18.5 45 C18.5 34 20 22 26 14Z" fill="url(#hairg)"/>
<path d="M39 46 L53 44 L54 53 C60 55 66 56 69 59 L70 68 L40 68 L38 58Z" fill="#f4d4c3"/>
<path d="M27.5 59 C24 62 22 70 21.5 80 C21 88 21.5 95 22 100 L30 100 C29 92 29 82 30.3 70 C30.8 64 30.5 61 30.5 59Z" fill="#f2cfbd"/>
<path d="M68.6 59 C73 62 76 68 76.8 76 L79 84 C82 82 85 84 85.5 88 C85.5 93 82 95.5 79 95 L74 93 L72 70Z" fill="#f2cfbd"/>
<path d="M30.3 59 C34 60 37 61 39 62 C42 68 60 68 64 57 L68 58 C70 62 72 70 73 80 L74 100 L33 100 C32.5 92 32.3 84 32.3 79.7 C32 72 31 64 30.3 59Z" fill="#f1eef4"/>
<path d="M33 70 C34 80 34 90 35 100 L38 100 C37 90 36 80 35 70Z" fill="#e2dce8"/>
<path d="M30 28 C31 23 38 19 46 19 C54 19 59 23 59.5 31 C60 39 57 46 52 50.5 C49 53 45 53 42 51.5 C36 48 31.5 41 30.5 34Z" fill="#f8dfd2"/>
<path d="M25 20 C29 9 42 5 53 6 C61 7 66 12 67 20 L66 30 L63 38 L60.5 27 L57 34 L55 23 L50 30 L48 21 L43 30 L41.5 22 L36 32 L34 26 L30.5 36 L29 44 C26 36 24.5 28 25 20Z" fill="#16121b"/>
<path d="M30.5 30 C27.5 40 27.5 48 29.5 56 L34.5 56 C33 48 32 41 32.5 34Z" fill="#16121b"/>
<path d="M59 26 C62 36 62 45 60 53 L65 55 C67 46 66 36 62.5 24Z" fill="#16121b"/>
<path d="M31 47 C33 52 36 55 40 57 L35 58 C33 56 31 52 31 47Z" fill="#4a2a6a"/>
<path d="M38 9 C45 6 54 6 60 10" stroke="#4f4659" stroke-width="1.4" fill="none"/>
<path d="M30 20 C33 15 37 12 41 11" stroke="#3d3547" stroke-width="1" fill="none"/>
<ellipse cx="38.1" cy="37" rx="3.9" ry="3.9" fill="#2a1640"/><ellipse cx="38.1" cy="37.7" rx="3" ry="3" fill="#a44be0"/><circle cx="37.2" cy="36.5" r="0.9" fill="#fff"/>
<ellipse cx="54" cy="33.2" rx="3.9" ry="3.9" fill="#2a1640"/><ellipse cx="54" cy="33.9" rx="3" ry="3" fill="#a44be0"/><circle cx="53.1" cy="32.7" r="0.9" fill="#fff"/>
<ellipse cx="46" cy="41" rx="0.7" ry="0.5" fill="#e8a49a"/>
<path d="M44 45 C46.5 46.3 50 45.6 51.5 44 C51 48 47 49.5 44 45Z" fill="#d6545e"/>
<ellipse cx="59.5" cy="89.5" rx="21.5" ry="4.6" fill="#f0edf2"/>
<path d="M40 90 C42 95 76 95 79 90 L78 96 C72 100 46 100 41 96Z" fill="#dedae2"/>
<rect x="41.7" y="67" width="36.5" height="18" fill="#251b2a"/>
<rect x="46" y="71.5" width="4" height="12" fill="#f0d7d0"/>
<rect x="56" y="71.5" width="5" height="12" fill="#f0d7d0"/>
<rect x="67" y="71.5" width="4" height="12" fill="#f0d7d0"/>
<ellipse cx="60" cy="67" rx="18.2" ry="3.8" fill="#2e2234"/>
<path d="M41.7 68 C44 71 47 69 49 71.5 C51 69 54 72 57 70 C60 72.5 63 69.5 66 71.5 C69 69 72 72 74 70 C76 71 78 69 78.2 68 L78.2 70 C75 73 45 73 41.7 70Z" fill="#e9dfe6"/>
<rect x="41.5" y="82" width="37" height="5" fill="#e0358f"/>
<ellipse cx="60" cy="87.2" rx="18.6" ry="3.2" fill="#e0358f"/>
<ellipse cx="59" cy="69" rx="6.5" ry="2.4" fill="#6a2fb5"/>
<rect x="52.5" y="60" width="1.2" height="8" fill="#e9b24e"/>
<ellipse cx="53.1" cy="59" rx="0.8" ry="1.4" fill="#f7a43a"/>
<rect x="56" y="60" width="1.2" height="8" fill="#e9b24e"/>
<ellipse cx="56.6" cy="59" rx="0.8" ry="1.4" fill="#f7a43a"/>
<rect x="59.5" y="60" width="1.2" height="8" fill="#e9b24e"/>
<ellipse cx="60.1" cy="59" rx="0.8" ry="1.4" fill="#f7a43a"/>
<rect x="63" y="60" width="1.2" height="8" fill="#e9b24e"/>
<ellipse cx="63.6" cy="59" rx="0.8" ry="1.4" fill="#f7a43a"/>
<rect x="65.5" y="60" width="1.2" height="8" fill="#e9b24e"/>
<ellipse cx="66.1" cy="59" rx="0.8" ry="1.4" fill="#f7a43a"/>
<text x="67.2" y="17.6" font-size="8.6" font-weight="700" fill="#2f1b5a" textLength="22.5" lengthAdjust="spacingAndGlyphs">Happy</text>
<text x="66.2" y="26.9" font-size="8.6" font-weight="700" fill="#2a1752" textLength="29.3" lengthAdjust="spacingAndGlyphs">Birthday</text>
<text x="73" y="38.1" font-size="6.6" font-weight="700" fill="#5f22b0" textLength="22.5" lengthAdjust="spacingAndGlyphs">Birthauy</text>
<circle cx="82.3" cy="16.6" r="1.2" fill="#f1c76a"/>
</g></g></defs>
<use href="#anime" transform="translate(602.4,216) scale(1.45)"/>
<rect x="667.00" y="365.00" width="15.80" height="14.70" rx="2.5" fill="#ea7422" />
<clipPath id="thclip"><rect x="668.4" y="366.4" width="13" height="12" rx="1.5"/></clipPath>
<g clip-path="url(#thclip)"><use href="#anime" transform="translate(668.4,366.2) scale(0.13)"/></g>
<rect x="474.80" y="389.20" width="61.60" height="15.30" rx="3.5" fill="url(#bg)" />
<path d="M502.80 394.70 h2 l0.8 0.8 h2.8 v4 h-5.6z" fill="#f5c518"/>
<rect x="542.40" y="389.20" width="61.60" height="15.30" rx="3.5" fill="url(#bg)" />
<rect x="610.00" y="389.20" width="61.80" height="15.30" rx="3.5" fill="url(#bg)" />
<rect x="678.00" y="389.20" width="61.20" height="15.30" rx="3.5" fill="url(#bg)" />
<rect x="745.60" y="389.20" width="61.40" height="15.30" rx="3.5" fill="url(#bg)" />
<rect x="813.00" y="389.20" width="61.50" height="15.30" rx="3.5" fill="url(#bg)" />
<path transform="translate(567.25,393.90) scale(0.600)" d="M1.5 2v7 M1.5 5h2 M4 2h5 M6.5 2v7.5 M4 9h5 M4 5.5h5" stroke="#f3f4f6" stroke-width="1.9" fill="none" opacity="1.00"/>
<path transform="translate(573.15,393.90) scale(0.600)" d="M1.5 2v7 M1.5 5h2 M4 2h5 M6.5 2v7.5 M4 9h5 M4 5.5h5" stroke="#f3f4f6" stroke-width="1.9" fill="none" opacity="1.00"/>
<path transform="translate(629.16,393.90) scale(0.600)" d="M1 2h8 M2 5h6 M1 8.5h8 M5 2v6.5" stroke="#f3f4f6" stroke-width="1.9" fill="none" opacity="1.00"/>
<path transform="translate(635.09,393.90) scale(0.600)" d="M2 1l-1 3 M1.5 3h7 M5 1v8 M2 6h6 M1 9h8" stroke="#f3f4f6" stroke-width="1.9" fill="none" opacity="1.00"/>
<path transform="translate(641.01,393.90) scale(0.600)" d="M1.5 2v7 M1.5 5h2 M4 2h5 M6.5 2v7.5 M4 9h5 M4 5.5h5" stroke="#f3f4f6" stroke-width="1.9" fill="none" opacity="1.00"/>
<path transform="translate(646.94,393.90) scale(0.600)" d="M2 1.5h6v7h-6z M2 5h6" stroke="#f3f4f6" stroke-width="1.9" fill="none" opacity="1.00"/>
<path transform="translate(689.80,393.90) scale(0.600)" d="M2 1v8.5 M4 2h5 M4 4.3h5 M4 6.6h5 M4 8.8h5" stroke="#f3f4f6" stroke-width="1.9" fill="none" opacity="1.00"/>
<path transform="translate(695.80,393.90) scale(0.600)" d="M1 3h8 M5 1v4 M2.5 5.5h5v3.5h-5z" stroke="#f3f4f6" stroke-width="1.9" fill="none" opacity="1.00"/>
<path transform="translate(701.80,393.90) scale(0.600)" d="M1.5 9V1.5h7V9 M3.5 4.5h3 M5 3v5" stroke="#f3f4f6" stroke-width="1.9" fill="none" opacity="1.00"/>
<path transform="translate(709.42,393.90) scale(0.600)" d="M2 1l-1 3 M1.5 3h7 M5 1v8 M2 6h6 M1 9h8" stroke="#f3f4f6" stroke-width="1.9" fill="none" opacity="1.00"/>
<path transform="translate(715.25,393.90) scale(0.600)" d="M1 2h8 M2 5h6 M1 8.5h8 M5 2v6.5" stroke="#f3f4f6" stroke-width="1.9" fill="none" opacity="1.00"/>
<path transform="translate(721.08,393.90) scale(0.600)" d="M2 1.5h6v7h-6z M2 5h6" stroke="#f3f4f6" stroke-width="1.9" fill="none" opacity="1.00"/>
<path transform="translate(760.62,393.90) scale(0.600)" d="M2 1v8.5 M4 2h5 M4 4.3h5 M4 6.6h5 M4 8.8h5" stroke="#f3f4f6" stroke-width="1.9" fill="none" opacity="1.00"/>
<path transform="translate(766.65,393.90) scale(0.600)" d="M1 3h8 M5 1v4 M2.5 5.5h5v3.5h-5z" stroke="#f3f4f6" stroke-width="1.9" fill="none" opacity="1.00"/>
<path transform="translate(772.68,393.90) scale(0.600)" d="M1.5 9V1.5h7V9 M3.5 4.5h3 M5 3v5" stroke="#f3f4f6" stroke-width="1.9" fill="none" opacity="1.00"/>
<path transform="translate(780.10,393.90) scale(0.600)" d="M2 1l-1 3 M1.5 3h7 M5 1v8 M2 6h6 M1 9h8" stroke="#f3f4f6" stroke-width="1.9" fill="none" opacity="1.00"/>
<path transform="translate(785.90,393.90) scale(0.600)" d="M1 2h8 M2 5h6 M1 8.5h8 M5 2v6.5" stroke="#f3f4f6" stroke-width="1.9" fill="none" opacity="1.00"/>
<path transform="translate(822.55,393.90) scale(0.600)" d="M1.5 2v7 M1.5 5h2 M4 2h5 M6.5 2v7.5 M4 9h5 M4 5.5h5" stroke="#f3f4f6" stroke-width="1.9" fill="none" opacity="1.00"/>
<path transform="translate(828.45,393.90) scale(0.600)" d="M1.5 2v7 M1.5 5h2 M4 2h5 M6.5 2v7.5 M4 9h5 M4 5.5h5" stroke="#f3f4f6" stroke-width="1.9" fill="none" opacity="1.00"/>
<path transform="translate(834.35,393.90) scale(0.600)" d="M2 1l-1 3 M1.5 3h7 M5 1v8 M2 6h6 M1 9h8" stroke="#f3f4f6" stroke-width="1.9" fill="none" opacity="1.00"/>
<path transform="translate(841.92,393.90) scale(0.600)" d="M1.5 9V1.5h7V9 M3.5 4.5h3 M5 3v5" stroke="#f3f4f6" stroke-width="1.9" fill="none" opacity="1.00"/>
<path transform="translate(847.77,393.90) scale(0.600)" d="M2 1.5h6v7h-6z M2 5h6" stroke="#f3f4f6" stroke-width="1.9" fill="none" opacity="1.00"/>
<path transform="translate(853.62,393.90) scale(0.600)" d="M1 2h8 M2 5h6 M1 8.5h8 M5 2v6.5" stroke="#f3f4f6" stroke-width="1.9" fill="none" opacity="1.00"/>
<path transform="translate(859.47,393.90) scale(0.600)" d="M1 3h8 M5 1v4 M2.5 5.5h5v3.5h-5z" stroke="#f3f4f6" stroke-width="1.9" fill="none" opacity="1.00"/>
<text x="475.00" y="416.92" font-size="5.6" fill="#e9ebef" font-weight="400" stroke="#e9ebef" stroke-width="0.12" textLength="94.20" lengthAdjust="spacingAndGlyphs">1girl,black hair,purple eyes,happy birthday,</text>
<text x="475.00" y="425.12" font-size="5.6" fill="#e9ebef" font-weight="400" stroke="#e9ebef" stroke-width="0.12" textLength="370.00" lengthAdjust="spacingAndGlyphs">Steps: 20, Sampler: Euler a, CFG scale: 7, Seed: 2445424795, Size: 512x512, Model hash: cca17b08da, Model: darkSushiMixMix_225D, Clip skip: 2, ENSD: 31337, Version: v1.4.0</text>
<text x="475.00" y="434.83" font-size="4.8" fill="#e5e7eb" font-weight="400" stroke="#e5e7eb" stroke-width="0.1" textLength="166.30" lengthAdjust="spacingAndGlyphs">Time taken: 4.03sTorch active/reserved: 3559/4336 MiB, Sys VRAM: 4648/16368 MiB (28.4%)</text>
<rect x="55.00" y="456.90" width="829.00" height="58.10" rx="0" fill="#000" />
<line x1="55.00" y1="456.30" x2="884.00" y2="456.30" stroke="#4a4a47" stroke-width="1.3" />
</svg>
</div></body></html>
